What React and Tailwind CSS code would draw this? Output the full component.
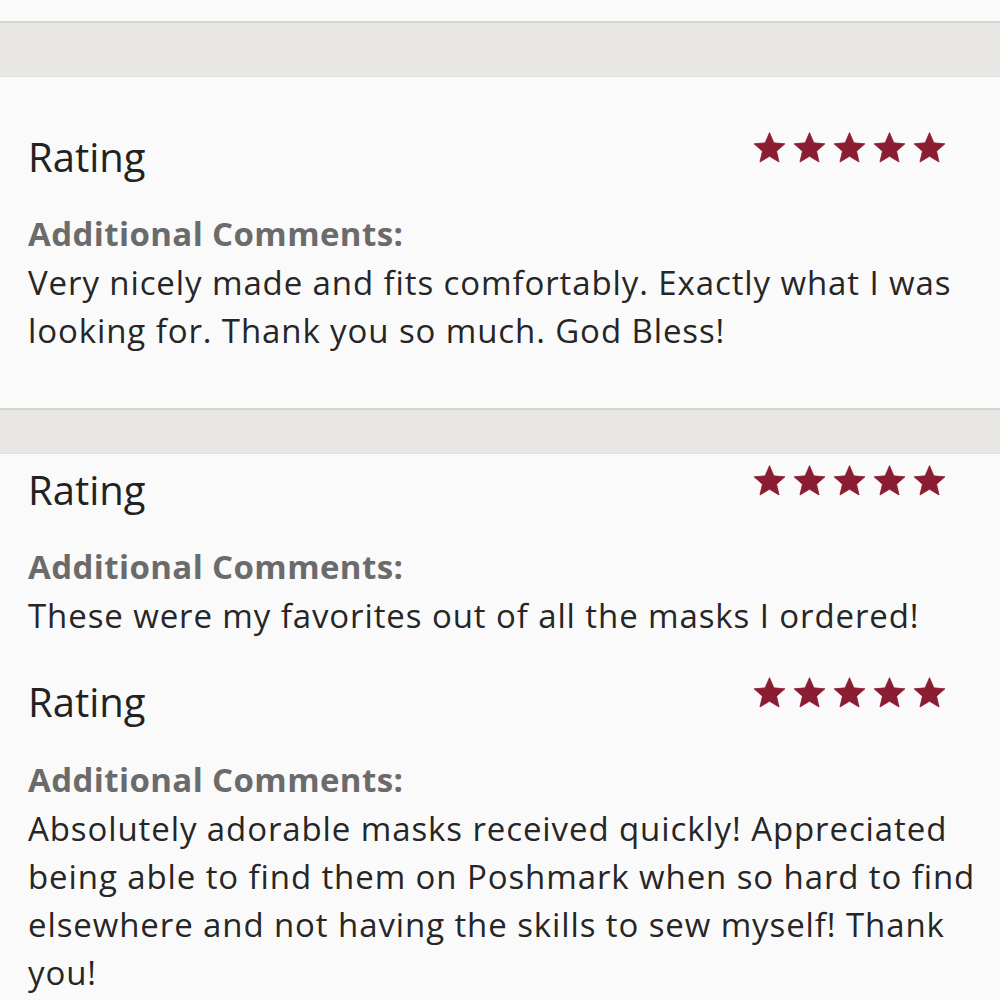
const reviews = [
  {
    id: 1,
    comment:
      'Very nicely made and fits comfortably. Exactly what I was looking for. Thank you so much. God Bless!',
  },
  {
    id: 2,
    comment: 'These were my favorites out of all the masks I ordered!',
  },
  {
    id: 3,
    comment:
      'Absolutely adorable masks received quickly! Appreciated being able to find them on Poshmark when so hard to find elsewhere and not having the skills to sew myself! Thank you!',
  },
];

function Star() {
  return (
    <svg viewBox="0 0 24 24" className="w-[33px] h-[33px]" fill="#8a1d31">
      <polygon
        points="12,1.2 15.18,8.63 23.22,9.35 17.14,14.67 18.94,22.55 12,18.4 5.06,22.55 6.86,14.67 0.78,9.35 8.82,8.63"
        stroke="#8a1d31"
        strokeWidth="0.6"
        strokeLinejoin="round"
      />
    </svg>
  );
}

function Stars() {
  return (
    <div className="flex gap-[7px] mr-[34px] -mt-[2px]">
      {[0, 1, 2, 3, 4].map((i) => (
        <Star key={i} />
      ))}
    </div>
  );
}

function Band({ height }) {
  return <div className={`${height} bg-[#e9e7e3] border-t-2 border-[#d7d5d1] border-b border-b-[#e3e1dd]`} />;
}

function Review({ comment, className, gap = 'mt-[29px]' }) {
  return (
    <div className={`pl-[28px] pr-[20px] ${className}`}>
      <div className="flex justify-between items-start">
        <h2 className="text-[40px] leading-[48px] text-[#222]">Rating</h2>
        <Stars />
      </div>
      <p className={`text-[33px] leading-[48px] font-bold tracking-[0.4px] text-[#6b6b6b] ${gap}`}>
        Additional Comments:
      </p>
      <p className="text-[33px] leading-[48px] tracking-[0.9px] text-[#262626] mt-[1px]">{comment}</p>
    </div>
  );
}

export default function App() {
  return (
    <div className="min-h-screen bg-[#fbfafb] font-['Open_Sans',sans-serif] overflow-hidden">
      <div className="h-[21px]" />
      <Band height="h-[56px]" />
      <Review comment={reviews[0].comment} className="pt-[56px] pb-[53px]" />
      <Band height="h-[46px]" />
      <Review comment={reviews[1].comment} className="pt-[12px]" />
      <Review comment={reviews[2].comment} className="pt-[38px]" gap="mt-[30px]" />
    </div>
  );
}
